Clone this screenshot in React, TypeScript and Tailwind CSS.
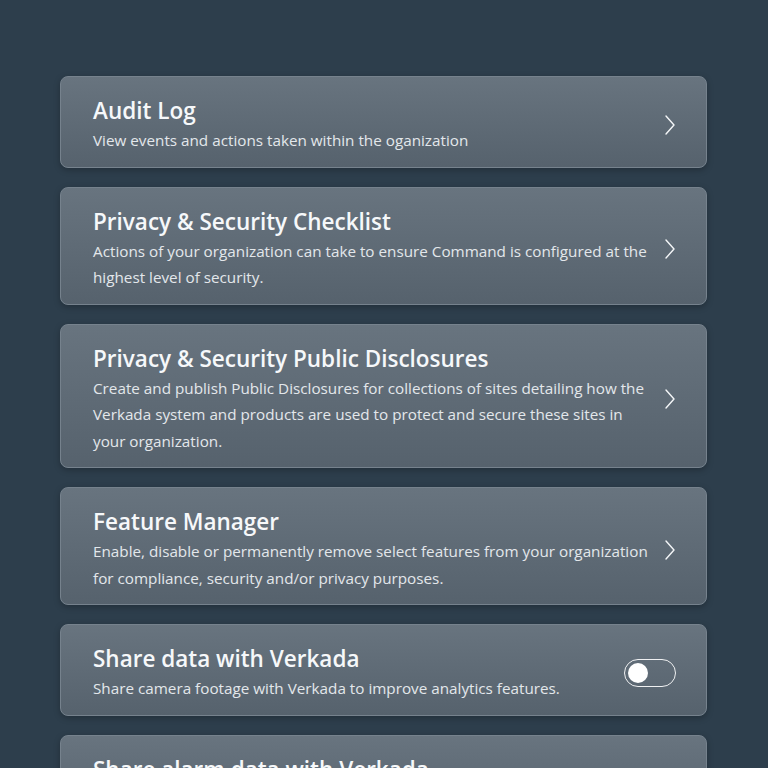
import React from "react";

const font = { fontFamily: '"Open Sans", "Noto Sans", sans-serif' };

function Chevron() {
  return (
    <svg width="12" height="22" viewBox="0 0 12 22" fill="none" className="shrink-0">
      <path d="M2 2 L10 11 L2 20" stroke="#f4f6f8" strokeWidth="1.4" strokeLinecap="round" strokeLinejoin="round" />
    </svg>
  );
}

function Toggle() {
  return (
    <div className="shrink-0 w-[52px] h-[28px] rounded-full border border-white/90 flex items-center px-[3px]">
      <div className="w-[20px] h-[20px] rounded-full bg-white" />
    </div>
  );
}

function Card({
  title,
  description,
  action,
}: {
  title: string;
  description: string;
  action: "link" | "toggle";
}) {
  return (
    <div className="flex items-center rounded-lg border border-[#76828d] bg-gradient-to-b from-[#68747f] to-[#56626d] shadow-[0_2px_6px_rgba(0,0,0,0.25)] pl-8 pr-[30px] pt-5 pb-[13px]">
      <div className="flex-1 min-w-0">
        <h3 className="text-[22.5px] leading-[28px] font-semibold text-[#f6f8fa]">{title}</h3>
        <p className="mt-[2px] text-[15.25px] leading-[26.5px] text-[#e3e7eb]">{description}</p>
      </div>
      <div className={action === "toggle" ? "ml-6" : "ml-4"}>
        {action === "toggle" ? <Toggle /> : <Chevron />}
      </div>
    </div>
  );
}

export default function App() {
  return (
    <div className="min-h-screen bg-[#2d3e4c] pt-[76px] pb-10" style={font}>
      <div className="w-[647px] ml-[60px] flex flex-col gap-[19px]">
        <Card
          title="Audit Log"
          description="View events and actions taken within the oganization"
          action="link"
        />
        <Card
          title="Privacy & Security Checklist"
          description="Actions of your organization can take to ensure Command is configured at the highest level of security."
          action="link"
        />
        <Card
          title="Privacy & Security Public Disclosures"
          description="Create and publish Public Disclosures for collections of sites detailing how the Verkada system and products are used to protect and secure these sites in your organization."
          action="link"
        />
        <Card
          title="Feature Manager"
          description="Enable, disable or permanently remove select features from your organization for compliance, security and/or privacy purposes."
          action="link"
        />
        <Card
          title="Share data with Verkada"
          description="Share camera footage with Verkada to improve analytics features."
          action="toggle"
        />
        <Card
          title="Share alarm data with Verkada"
          description="Share alarm events with Verkada to improve alarm features."
          action="toggle"
        />
      </div>
    </div>
  );
}
